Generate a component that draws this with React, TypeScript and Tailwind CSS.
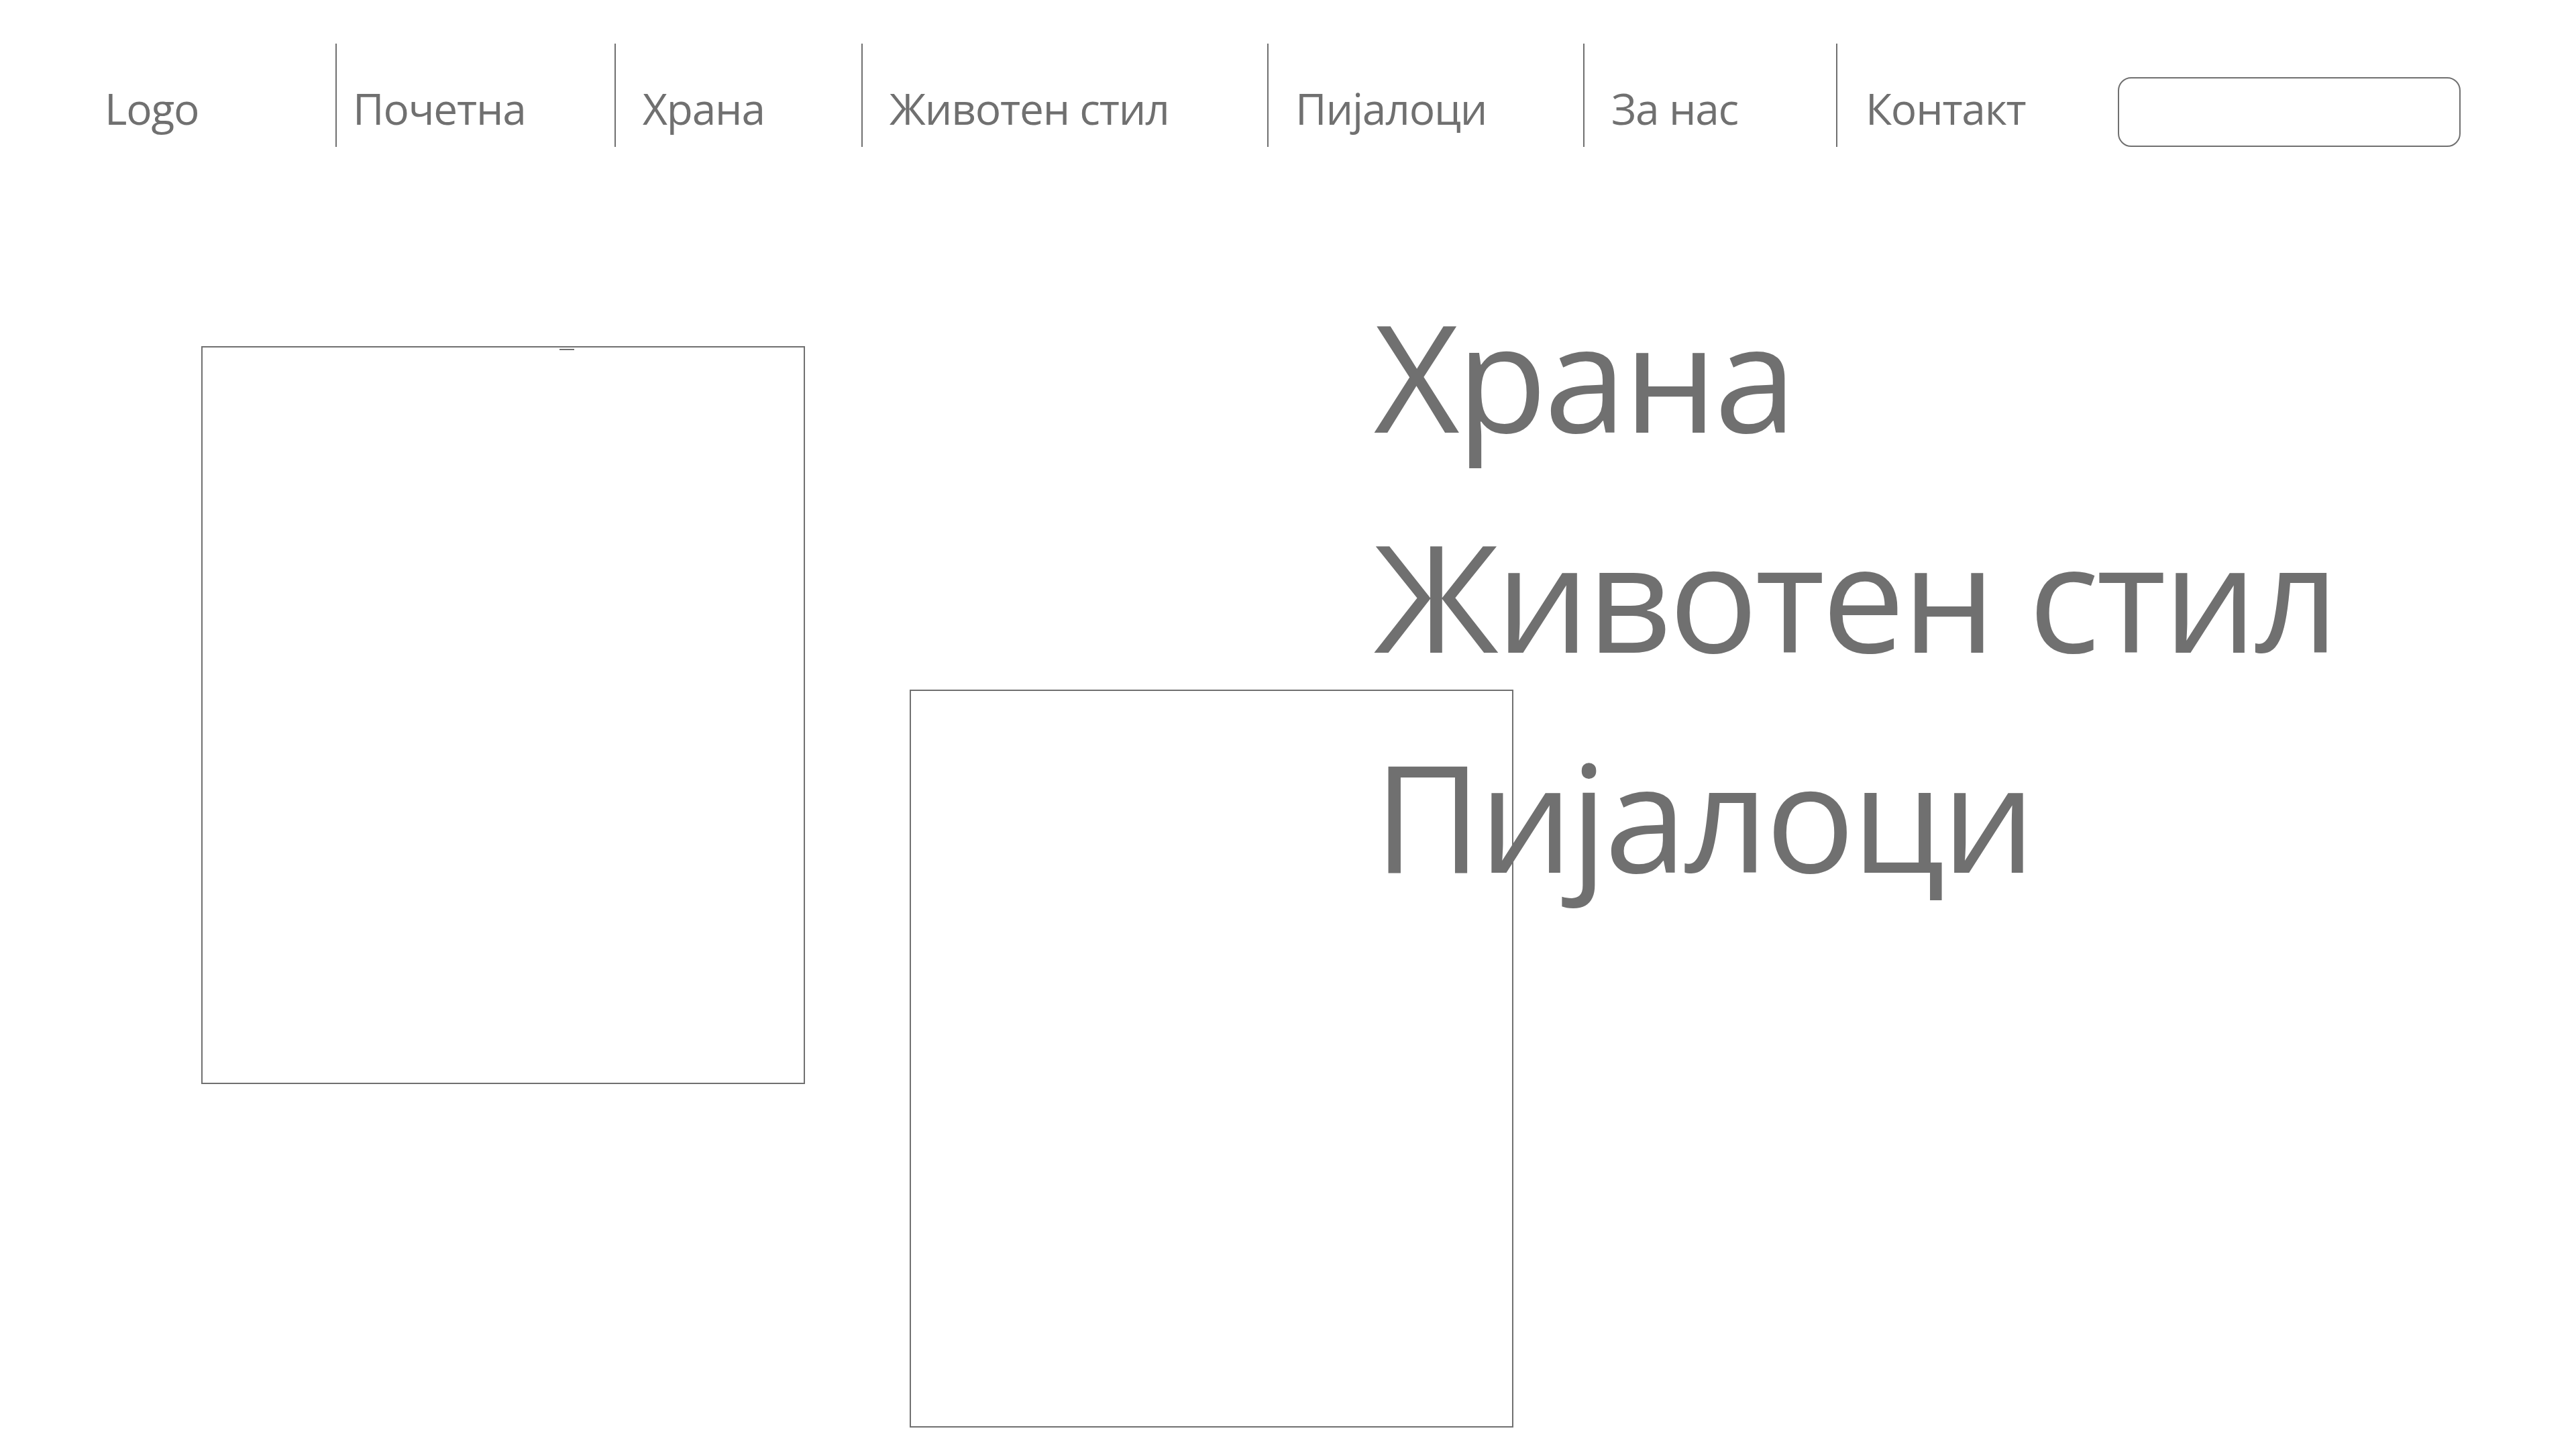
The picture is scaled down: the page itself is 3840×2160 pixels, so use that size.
import React from "react";

const navItems: { label: string; w: string; pl: string }[] = [
  { label: "Почетна", w: "w-[416px]", pl: "pl-[24px]" },
  { label: "Храна", w: "w-[368px]", pl: "pl-[40px]" },
  { label: "Животен стил", w: "w-[605px]", pl: "pl-[40px]" },
  { label: "Пијалоци", w: "w-[471px]", pl: "pl-[40px]" },
  { label: "За нас", w: "w-[377px]", pl: "pl-[40px]" },
  { label: "Контакт", w: "w-[420px]", pl: "pl-[42px]" },
];

export default function App() {
  return (
    <div
      className="w-[3840px] h-[2160px] bg-white text-[#707070] overflow-hidden"
      style={{ fontFamily: '"Open Sans", "Noto Sans", sans-serif' }}
    >
      <header className="pt-[65px] flex flex-row items-start">
        <div className="w-[500px] h-[154px] pl-[156px] pt-[49px] text-[64px] leading-normal tracking-[-1.2px]">
          Logo
        </div>
        {navItems.map((it) => (
          <div
            key={it.label}
            className={`${it.w} h-[154px] border-l-2 border-[#707070] ${it.pl} pt-[49px] text-[64px] leading-normal tracking-[-1.2px] whitespace-nowrap`}
          >
            {it.label}
          </div>
        ))}
        <div className="mt-[50px] w-[511px] h-[104px] rounded-[20px] border-2 border-[#707070]" />
      </header>

      <main className="pt-[177px] flex flex-row items-start">
        <div className="relative ml-[300px] mt-[120px] w-[900px] h-[1100px] border-2 border-[#707070] shrink-0">
          <div className="absolute left-[532px] top-[2px] w-[22px] h-[2px] bg-[#707070]" />
        </div>
        <div className="ml-[156px] mt-[632px] w-[900px] h-[1100px] border-2 border-[#707070] shrink-0" />
        <div className="ml-[-208px] flex flex-col text-[221px] leading-[328px] tracking-[-4.5px] whitespace-nowrap">
          <span>Храна</span>
          <span>Животен стил</span>
          <span>Пијалоци</span>
        </div>
      </main>
    </div>
  );
}
